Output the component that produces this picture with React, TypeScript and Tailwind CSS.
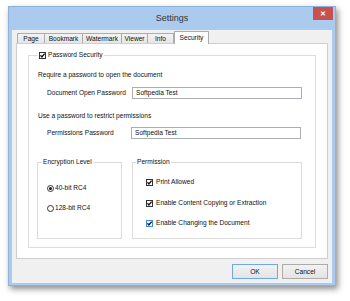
import React from "react";

function Check({ blue = false }: { blue?: boolean }) {
  return (
    <span
      className={`flex w-[7px] h-[7px] shrink-0 items-center justify-center bg-white border ${
        blue ? "border-[#3c8be0]" : "border-[#333333]"
      }`}
    >
      <svg width="5" height="5" viewBox="0 0 5 5">
        <path d="M0.4 2.3 L1.9 3.9 L4.6 0.6" fill="none" stroke="#111" strokeWidth="1.35" />
      </svg>
    </span>
  );
}

function Radio({ on = false }: { on?: boolean }) {
  return (
    <span className="flex w-[7px] h-[7px] shrink-0 items-center justify-center rounded-full bg-white border border-[#333333]">
      {on && <span className="block w-[3px] h-[3px] rounded-full bg-[#111]" />}
    </span>
  );
}

function Tab({ label, w, first = false }: { label: string; w: string; first?: boolean }) {
  return (
    <div
      className={`${w} h-[10px] ${first ? "" : "-ml-px"} flex items-center justify-center border border-b-0 border-[#acacac] bg-gradient-to-b from-[#f3f3f3] to-[#e6e6e6]`}
    >
      {label}
    </div>
  );
}

export default function App() {
  return (
    <div className="w-[350px] h-[301px] bg-white pt-[6px] pl-[8px] font-['Liberation_Sans',Arial,sans-serif] text-[6.6px] leading-[8px] text-[#111]">
      <div className="w-[328px] h-[280px] bg-[#aacbee] border border-[#8db3dc] flex flex-col shadow-[2px_3px_6px_rgba(0,0,0,0.45)]">
        <div className="relative h-[23px] flex items-center justify-center text-[9px] leading-[10px] text-[#333] pb-[1px]">
          Settings
          <div className="absolute right-[2px] top-0 w-[20px] h-[13px] bg-[#c75050] flex items-center justify-center text-white text-[7px] leading-[8px] font-bold">
            ✕
          </div>
        </div>
        <div className="mx-[3px] h-[253px] bg-[#f0f0f0] flex flex-col px-[4px] pt-[1px]">
          <div className="flex items-end h-[12px] pl-[1px]">
            <Tab label="Page" w="w-[28px]" first />
            <Tab label="Bookmark" w="w-[39px]" />
            <Tab label="Watermark" w="w-[40px]" />
            <Tab label="Viewer" w="w-[27px]" />
            <Tab label="Info" w="w-[27px]" />
            <div className="relative z-10 w-[35px] h-[13px] -mb-px flex items-center justify-center border border-b-0 border-[#acacac] bg-white pb-[1px]">
              Security
            </div>
          </div>
          <div className="h-[216px] bg-white border border-[#cfcfcf] pl-[11px]">
            <fieldset className="mt-[7px] w-[288px] h-[197px] border border-[#dcdcdc] m-0 p-0 min-w-0">
              <legend className="ml-[9px] px-[1px]">
                <span className="flex items-center gap-[2px] h-[8px]">
                  <Check />
                  <span>Password Security</span>
                </span>
              </legend>
              <div className="mt-[12px] ml-[9px] h-[8px]">Require a password to open the document</div>
              <div className="mt-[8px] flex items-center h-[12px]">
                <div className="ml-[18px] w-[85px]">Document Open Password</div>
                <div className="w-[170px] h-[12px] border border-[#abadb3] bg-white pl-[3px] flex items-center">
                  Softpedia Test
                </div>
              </div>
              <div className="mt-[13px] ml-[9px] h-[8px]">Use a password to restrict permissions</div>
              <div className="mt-[7px] flex items-center h-[12px]">
                <div className="ml-[18px] w-[84px]">Permissions Password</div>
                <div className="w-[170px] h-[12px] border border-[#abadb3] bg-white pl-[3px] flex items-center">
                  Softpedia Test
                </div>
              </div>
              <div className="mt-[19px] ml-[8px] flex gap-[10px]">
                <fieldset className="w-[85px] h-[81px] border border-[#dcdcdc] m-0 p-0 min-w-0">
                  <legend className="ml-[4px] px-[1px] h-[8px]">Encryption Level</legend>
                  <div className="mt-[18px] ml-[9px] h-[8px] flex items-center gap-[1px]">
                    <Radio on />
                    <span>40-bit RC4</span>
                  </div>
                  <div className="mt-[12px] ml-[9px] h-[8px] flex items-center gap-[1px]">
                    <Radio />
                    <span>128-bit RC4</span>
                  </div>
                </fieldset>
                <fieldset className="w-[170px] h-[81px] border border-[#dcdcdc] m-0 p-0 min-w-0">
                  <legend className="ml-[3px] px-[1px] h-[8px]">Permission</legend>
                  <div className="mt-[12px] ml-[13px] h-[8px] flex items-center gap-[3px]">
                    <Check />
                    <span>Print Allowed</span>
                  </div>
                  <div className="mt-[13px] ml-[13px] h-[8px] flex items-center gap-[3px]">
                    <Check />
                    <span>Enable Content Copying or Extraction</span>
                  </div>
                  <div className="mt-[12px] ml-[13px] h-[8px] flex items-center gap-[3px]">
                    <Check blue />
                    <span>Enable Changing the Document</span>
                  </div>
                </fieldset>
              </div>
            </fieldset>
          </div>
          <div className="mt-[5px] flex justify-end gap-[4px]">
            <div className="w-[46px] h-[15px] flex items-center justify-center border border-[#6fa9e4] bg-gradient-to-b from-[#f2f2f2] to-[#e4e4e4]">
              OK
            </div>
            <div className="w-[46px] h-[15px] flex items-center justify-center border border-[#acacac] bg-gradient-to-b from-[#f2f2f2] to-[#e4e4e4]">
              Cancel
            </div>
          </div>
        </div>
      </div>
    </div>
  );
}
